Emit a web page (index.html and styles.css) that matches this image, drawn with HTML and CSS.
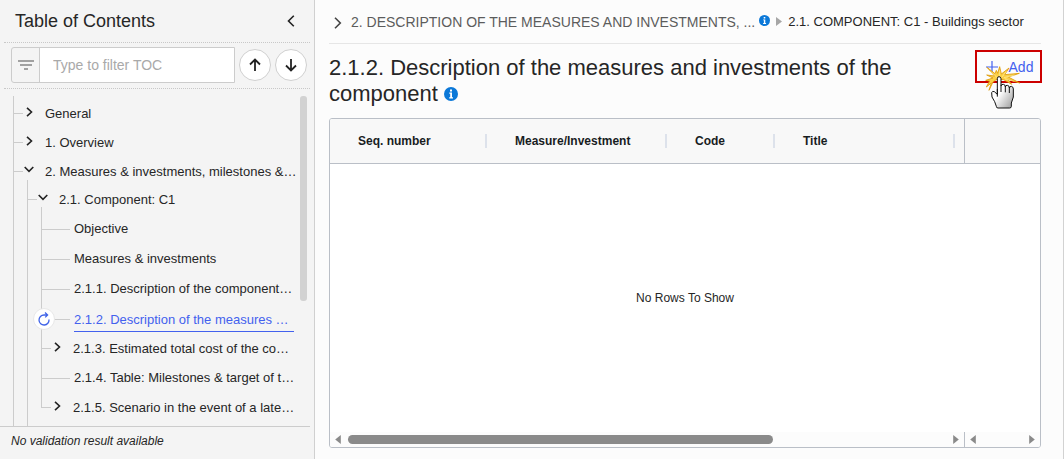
FILE: index.html
```html
<!DOCTYPE html>
<html lang="en">
<head>
<meta charset="utf-8">
<meta name="viewport" content="width=device-width, initial-scale=1">
<title>2.1.2. Description of the measures and investments of the component</title>
<link rel="stylesheet" href="styles.css">
</head>
<body>
<div class="app">
  <aside class="sidebar">
    <header class="toc-header">
      <h2 class="toc-title">Table of Contents</h2>
      <button class="icon-button" type="button" aria-label="Collapse table of contents">
        <svg width="8" height="12" viewBox="0 0 8 12"><path d="M6.8 .7 1.5 6l5.3 5.3" fill="none" stroke="#222" stroke-width="1.6"/></svg>
      </button>
    </header>
    <div class="toc-filter">
      <div class="filter-box">
        <label class="filter-label" for="toc-filter" aria-label="Filter">
          <svg width="16" height="10" viewBox="0 0 16 10"><path d="M0 1h16M2 5h12M6 9h4" stroke="#858585" stroke-width="1.600"/></svg>
        </label>
        <input class="filter-input" id="toc-filter" type="text" placeholder="Type to filter TOC">
      </div>
      <button class="round-button" type="button" aria-label="Previous">
        <svg width="14" height="14" viewBox="0 0 14 14"><path d="M7 13V1.500M2 6.500 7 1.500 12 6.500" fill="none" stroke="#222" stroke-width="1.800"/></svg>
      </button>
      <button class="round-button" type="button" aria-label="Next">
        <svg width="14" height="14" viewBox="0 0 14 14"><path d="M7 1v11.500M2 7.500 7 12.500 12 7.500" fill="none" stroke="#222" stroke-width="1.800"/></svg>
      </button>
    </div>
    <nav class="toc-body" aria-label="Table of contents">
      <ul class="tree tree-open">
        <li class="node"><div class="row">
          <button class="toggle" type="button" aria-label="Expand"><svg width="7" height="10" viewBox="0 0 7 10"><path d="M1 .8 5.500 5 1 9.200" fill="none" stroke="#222" stroke-width="1.6"/></svg></button>
          <a class="link" href="#general">General</a></div></li>
        <li class="node"><div class="row">
          <button class="toggle" type="button" aria-label="Expand"><svg width="7" height="10" viewBox="0 0 7 10"><path d="M1 .8 5.500 5 1 9.200" fill="none" stroke="#222" stroke-width="1.6"/></svg></button>
          <a class="link" href="#overview">1. Overview</a></div></li>
        <li class="node"><div class="row">
          <button class="toggle" type="button" aria-label="Collapse"><svg width="10" height="7" viewBox="0 0 10 7"><path d="M.7 1 5 5.300 9.300 1" fill="none" stroke="#222" stroke-width="1.6"/></svg></button>
          <a class="link" href="#measures">2. Measures &amp; investments, milestones &amp;…</a></div>
          <ul class="tree tree-open">
            <li class="node"><div class="row">
              <button class="toggle" type="button" aria-label="Collapse"><svg width="10" height="7" viewBox="0 0 10 7"><path d="M.7 1 5 5.300 9.300 1" fill="none" stroke="#222" stroke-width="1.6"/></svg></button>
              <a class="link" href="#c1">2.1. Component: C1</a></div>
              <ul class="tree">
                <li class="node leaf"><div class="row"><a class="link" href="#objective">Objective</a></div></li>
                <li class="node leaf"><div class="row"><a class="link" href="#investments">Measures &amp; investments</a></div></li>
                <li class="node leaf"><div class="row"><a class="link" href="#s211">2.1.1. Description of the component…</a></div></li>
                <li class="node leaf"><div class="row"><span class="refresh"><svg width="12" height="14" viewBox="0 0 12 14"><path d="M11 7.500A5 5 0 1 1 6 3h3.500M7 .6 9.600 3 7.200 5.400" fill="none" stroke="#3f63e8" stroke-width="1.300"/></svg></span><a class="link current" href="#s212" aria-current="page">2.1.2. Description of the measures …</a></div></li>
                <li class="node"><div class="row">
                  <button class="toggle" type="button" aria-label="Expand"><svg width="7" height="10" viewBox="0 0 7 10"><path d="M1 .8 5.500 5 1 9.200" fill="none" stroke="#222" stroke-width="1.6"/></svg></button>
                  <a class="link" href="#s213">2.1.3. Estimated total cost of the co…</a></div></li>
                <li class="node leaf"><div class="row"><a class="link" href="#s214">2.1.4. Table: Milestones &amp; target of t…</a></div></li>
                <li class="node"><div class="row">
                  <button class="toggle" type="button" aria-label="Expand"><svg width="7" height="10" viewBox="0 0 7 10"><path d="M1 .8 5.500 5 1 9.200" fill="none" stroke="#222" stroke-width="1.6"/></svg></button>
                  <a class="link" href="#s215">2.1.5. Scenario in the event of a late…</a></div></li>
              </ul>
            </li>
          </ul>
        </li>
      </ul>
      <div class="vscroll"><div class="vthumb"></div></div>
    </nav>
    <footer class="toc-footer">No validation result available</footer>
  </aside>

  <main class="main">
    <nav class="breadcrumb" aria-label="Breadcrumb">
      <svg class="crumb-chevron" width="8" height="12" viewBox="0 0 8 12"><path d="M1 .7 6.300 6 1 11.300" fill="none" stroke="#444" stroke-width="1.6"/></svg>
      <a class="crumb" href="#measures">2. DESCRIPTION OF THE MEASURES AND INVESTMENTS, ...</a>
      <svg class="crumb-info" width="11" height="11" viewBox="0 0 14 14"><circle cx="7" cy="7" r="7" fill="#0b78d8"/><path d="M6 2.600h2v2H6zM5.300 5.600H8v4.600h1v1.200H5.200v-1.200h1V6.800h-.9z" fill="#fff"/></svg>
      <svg class="crumb-arrow" width="6" height="9" viewBox="0 0 6 9"><path d="M0 0 6 4.500 0 9z" fill="#a6a6a6"/></svg>
      <a class="crumb crumb-last" href="#c1">2.1. COMPONENT: C1 - Buildings sector</a>
    </nav>
    <header class="page-header">
      <h1 class="page-title">2.1.2. Description of the measures and investments of the component
        <svg class="title-info" width="14" height="14" viewBox="0 0 14 14"><circle cx="7" cy="7" r="7" fill="#0b78d8"/><path d="M6 2.600h2v2H6zM5.300 5.600H8v4.600h1v1.200H5.200v-1.200h1V6.800h-.9z" fill="#fff"/></svg>
      </h1>
      <div class="highlight">
        <button class="add-button" type="button">
          <svg width="12" height="12" viewBox="0 0 12 12"><path d="M6 0v12M0 6h12" stroke="#4361ee" stroke-width="1.200"/></svg>
          Add
        </button>
        <svg class="pointer" width="45" height="48" viewBox="0 0 135 144">
          <defs><linearGradient id="hand" x1="0" y1="0" x2="1" y2="1"><stop offset=".45" stop-color="#fff"/><stop offset="1" stop-color="#999"/></linearGradient></defs>
          <path d="M30 13 54 32 58 22 62 31 68 11 73 33 96 15 83 35 127 31 94 42 128 60 92 49 104 64 80 50 60 48 48 57 36 82 43 60 28 72 38 54 26 52 48 45 29 36 53 39Z" fill="#fbcf45" stroke="#dd9a09" stroke-width="2.500"/>
          <path d="M61 44 40 25M68 42 68 22M75 42 88 25M81 44 112 36M83 47 112 55" stroke="#fff1a0" stroke-width="2"/>
          <path d="M61 93V47q0-6 5-6t6 6v22q1-6 7-5 6 0 6 8 1-6 6-5 6 0 6 8 1-5 6-5 6 1 6 8v24l-6 18v10q0 5-5 5H63q-5 0-5-5l-5-14-8-14-1-13q2-6 8-3l9 8Z" fill="url(#hand)" stroke="#111" stroke-width="3" stroke-linejoin="round"/>
          <path d="M61 78v23M72 68v19M85 71v17M97 74v16" stroke="#111" stroke-width="3"/>
        </svg>
      </div>
    </header>
    <section class="grid" aria-label="Measures and investments">
      <table class="grid-table">
        <colgroup><col class="col-seq"><col class="col-measure"><col class="col-code"><col><col class="col-actions"></colgroup>
        <thead><tr>
          <th scope="col"><div class="cell">Seq. number</div></th>
          <th scope="col"><div class="cell">Measure/Investment</div></th>
          <th scope="col"><div class="cell">Code</div></th>
          <th scope="col"><div class="cell cell-title">Title</div></th>
          <td class="pinned"></td>
        </tr></thead>
      </table>
      <div class="grid-empty">No Rows To Show</div>
      <div class="grid-scroll">
        <div class="hscroll">
          <svg width="6" height="9" viewBox="0 0 5 8"><path d="M5 0v8L0 4z" fill="#8a8a8a"/></svg>
          <div class="htrack"><div class="hthumb"></div></div>
          <svg width="6" height="9" viewBox="0 0 5 8"><path d="M0 0v8l5-4z" fill="#8a8a8a"/></svg>
        </div>
        <div class="hscroll hscroll-pinned">
          <svg width="6" height="9" viewBox="0 0 5 8"><path d="M5 0v8L0 4z" fill="#8a8a8a"/></svg>
          <svg width="6" height="9" viewBox="0 0 5 8"><path d="M0 0v8l5-4z" fill="#8a8a8a"/></svg>
        </div>
      </div>
    </section>
  </main>
</div>
</body>
</html>
```
FILE: styles.css
```css
* { box-sizing: border-box; }

body {
  margin: 0;
  background: #fcfcfc;
  color: #262626;
  font: 13px/18px "Liberation Sans", Arial, sans-serif;
}

button { padding: 0; border: 0; background: none; font: inherit; cursor: pointer; }
svg { display: block; flex: none; }
a { color: inherit; text-decoration: none; }

.app { display: flex; height: 100vh; border-right: 1px solid #d2d2d2; }

/* Sidebar */
.sidebar {
  display: flex;
  flex: none;
  flex-direction: column;
  width: 315px;
  padding-right: 4px;
  border-right: 1px solid #d0d0d0;
  background: #f4f4f4;
}
.toc-header {
  display: flex;
  align-items: center;
  justify-content: space-between;
  height: 43px;
  margin-left: 4px;
  padding: 0 15px 0 11px;
  border-bottom: 1px dotted #c8c8c8;
}
.toc-title { margin: 0; font-size: 18px; font-weight: 400; line-height: 24px; }
.toc-filter {
  display: flex;
  align-items: center;
  gap: 4px;
  height: 46px;
  margin-left: 4px;
  padding: 0 3px 2px 7px;
  border-bottom: 1px dotted #c8c8c8;
}
.filter-box {
  display: flex;
  flex: 1;
  min-width: 0;
  height: 36px;
  border: 1px solid #ccc;
  border-radius: 3px 0 0 3px;
}
.filter-label { display: grid; place-items: center; flex: none; width: 28px; border-right: 1px solid #ccc; }
.filter-input {
  flex: 1;
  min-width: 0;
  padding: 0 13px;
  border: 0;
  background: #fff;
  color: #262626;
  font: inherit;
  font-size: 14px;
}
.filter-input::placeholder { color: #a9a9a9; }
.round-button {
  display: grid;
  place-items: center;
  flex: none;
  width: 32px;
  height: 32px;
  border: 1px solid #d0d0d0;
  border-radius: 50%;
  background: #fff;
}

/* Tree */
.toc-body { display: flex; flex: 1; min-height: 0; padding-top: 7px; overflow: hidden; }
.tree { margin: 0; padding: 0; list-style: none; }
.toc-body > .tree { flex: 1; min-width: 0; margin-left: 13px; padding-top: 3px; }
.tree-open { border-left: 1px solid #ccc; padding-bottom: 20px; }
.node { position: relative; }
.node .tree { margin: -6px 0 0 13px; padding-top: 5px; }
.row { display: flex; align-items: center; height: 29px; }
.leaf > .row { height: 30px; }
.row::before { content: ""; flex: none; width: 9px; height: 1px; background: #ccc; }
.leaf > .row::before { width: 28px; margin-right: 4px; }
.toggle { display: grid; place-items: center; flex: none; width: 12px; height: 16px; margin: 0 10px 4px 0; }
.link { flex: 1; min-width: 0; margin-right: 2px; overflow: hidden; white-space: nowrap; }
.link.current { height: 25px; margin-right: 6px; padding-top: 4px; border-bottom: 1px solid #4361ee; color: #4361ee; }
.tree .tree .tree { margin-top: 0; padding-top: 0; }
.tree .tree .tree > .node { border-left: 1px solid #ccc; }
.tree .tree .tree > .node:first-child::before {
  content: "";
  position: absolute;
  bottom: 100%;
  left: -1px;
  width: 1px;
  height: 7px;
  background: #ccc;
}
.tree .tree .tree > .node:last-child { border-left-color: transparent; }
.tree .tree .tree > .node:last-child::before {
  content: "";
  position: absolute;
  top: 0;
  left: -1px;
  width: 1px;
  height: 15px;
  background: #ccc;
}
.refresh {
  position: absolute;
  left: -9px;
  display: grid;
  place-items: center;
  width: 22px;
  height: 22px;
  border: 1px solid #e8e8e8;
  border-radius: 50%;
  background: #fff;
}
.vscroll { flex: none; width: 7px; margin-right: 3px; }
.vthumb { height: 62%; border-radius: 3px; background: #d2d2d2; }
.toc-footer {
  height: 33px;
  padding: 5px 11px;
  border-top: 1px solid #ccc;
  font-size: 12px;
  font-style: italic;
}

/* Main */
.main { display: flex; flex: 1; flex-direction: column; min-width: 0; padding: 0 22px 11px 14px; }
.breadcrumb { display: flex; align-items: center; height: 44px; border-bottom: 1px solid #e6e6e6; }
.crumb-chevron { margin: 2px 9px 0 5px; }
.crumb { color: #5c5c5c; font-size: 14px; white-space: nowrap; }
.crumb-last { color: #262626; font-size: 13px; }
.crumb-info { margin: 0 6px 3px 4px; }
.crumb-arrow { margin-right: 6px; }
.page-header { display: flex; justify-content: space-between; padding: 11px 0; }
.page-title { max-width: 600px; margin: 0; font-size: 22px; font-weight: 400; line-height: 26px; }
.title-info { display: inline-block; vertical-align: 0; }
.highlight { position: relative; width: 67px; height: 33px; margin: -5px -1px 0 0; border: 2px solid #c00; }
.add-button {
  display: flex;
  align-items: center;
  justify-content: center;
  gap: 11px;
  width: 100%;
  height: 100%;
  padding-left: 2px;
  color: #4361ee;
  font-size: 14px;
}
.pointer { position: absolute; top: 11px; left: 0; pointer-events: none; }

/* Grid */
.grid {
  display: flex;
  flex: 1;
  flex-direction: column;
  min-height: 200px;
  border: 1px solid #babfc7;
  border-radius: 3px;
  background: #fff;
  overflow: hidden;
}
.grid-table { width: 100%; border-collapse: collapse; table-layout: fixed; background: #f8f8f8; color: #181d1f; font-size: 12px; }
.grid-table th, .grid-table td { height: 44px; padding: 0; border-bottom: 1px solid #babfc7; text-align: left; }
.col-seq { width: 157px; }
.col-measure { width: 180px; }
.col-code { width: 108px; }
.col-actions { width: 76px; }
.cell { height: 14px; padding-left: 28px; border-right: 2px solid #dde2eb; line-height: 14px; }
.cell-title { margin-right: 9px; }
.grid-table .pinned { border-left: 1px solid #babfc7; }
.grid-empty { display: grid; flex: 1; place-items: center; font-size: 12px; }
.grid-scroll { display: flex; height: 15px; background: #fcfcfc; }
.hscroll { display: flex; flex: 1; align-items: center; gap: 7px; padding: 0 5px; }
.hscroll-pinned { flex: none; justify-content: space-between; width: 76px; border-left: 1px solid #babfc7; }
.htrack { flex: 1; }
.hthumb { width: 71%; height: 9px; border-radius: 5px; background: #8a8a8a; }
```
